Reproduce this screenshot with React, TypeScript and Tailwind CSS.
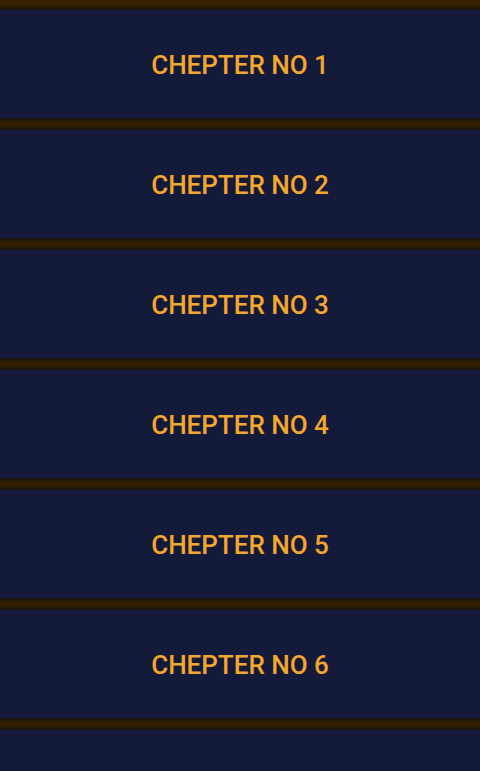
export default function App() {
  const chapters = [1, 2, 3, 4, 5, 6];
  return (
    <main className="h-[771px] overflow-hidden bg-[#372300] pt-[10px]" style={{ fontFamily: 'Roboto, "Noto Sans", sans-serif' }}>
      <div className="flex flex-col gap-[12px]">
        {chapters.map((n) => (
          <div
            key={n}
            className="h-[108px] shrink-0 flex items-center justify-center pt-[2px] bg-[#141a3a] shadow-[0_0_4px_2px_rgba(10,12,20,0.8)]"
          >
            <span className="text-[26px] font-medium text-[#f5a62c]">CHEPTER NO {n}</span>
          </div>
        ))}
        <div className="h-[108px] shrink-0 bg-[#141a3a] shadow-[0_0_4px_2px_rgba(10,12,20,0.8)]" />
      </div>
    </main>
  );
}
